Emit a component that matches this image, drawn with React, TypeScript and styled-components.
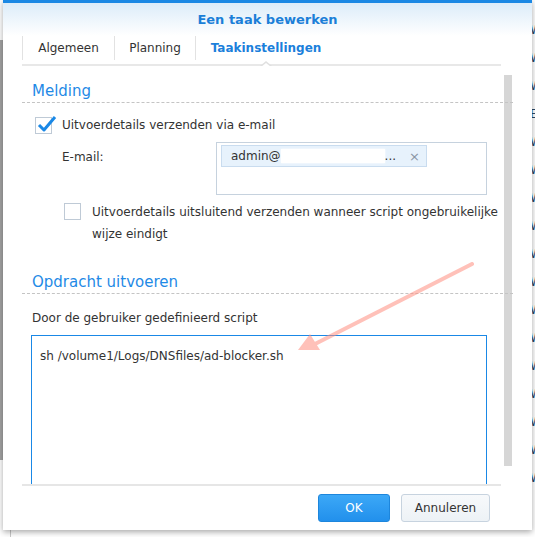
import React from 'react';
import styled, { createGlobalStyle } from 'styled-components';

const GlobalStyle = createGlobalStyle`
  html, body {
    margin: 0;
    padding: 0;
    background: #fff;
  }
  body {
    font-family: "DejaVu Sans", Verdana, sans-serif;
    color: #333;
  }
`;

const Desktop = styled.div`
  position: relative;
  width: 535px;
  height: 537px;
  overflow: hidden;
  background: #fff;
`;

const LeftStrip = styled.div`
  position: absolute;
  left: 0;
  top: 40px;
  width: 3px;
  height: 420px;
  background: #a4a4a4;
`;

/* list of the window behind the dialog, only a sliver shows at the right edge */
const BehindList = styled.div`
  position: absolute;
  left: 530px;
  top: 23px;
  display: flex;
  flex-direction: column;
  gap: 14px;
  font-size: 12px;
  line-height: 14px;
  color: #2b4a6a;
`;

const BehindLine = styled.div`
  position: absolute;
  left: 10px;
  top: 528px;
  width: 1px;
  height: 9px;
  background: #c8c8c8;
`;

const Dialog = styled.div`
  position: absolute;
  left: 3px;
  top: 0;
  width: 529px;
  height: 527px;
  background: #fff;
  border-top: 3px solid #1b88e4;
  box-shadow: 0 2px 6px rgba(0, 0, 0, 0.35);
  display: flex;
  flex-direction: column;
`;

const Header = styled.div`
  height: 33px;
  background: linear-gradient(#dcecf9, #ffffff);
  display: flex;
  align-items: center;
  justify-content: center;
  font-size: 13px;
  font-weight: bold;
  color: #1b7fd8;
`;

const TabBar = styled.div`
  position: relative;
  display: flex;
  margin: 0 31px 0 19px;
  height: 28px;
  border-bottom: 2px solid #e8e8e8;
`;

const Tab = styled.div<{ $active?: boolean; $w: number }>`
  width: ${p => p.$w}px;
  height: 24px;
  box-sizing: border-box;
  border-left: 1px solid #e2e2e2;
  display: flex;
  align-items: center;
  justify-content: center;
  font-size: 12px;
  font-weight: ${p => (p.$active ? 'bold' : 'normal')};
  color: ${p => (p.$active ? '#1b80db' : '#333')};
  &:last-child {
    border-right: 1px solid #e2e2e2;
  }
`;

const Caret = styled.div`
  position: absolute;
  left: 238px;
  bottom: -2px;
  width: 0;
  height: 0;
  border-left: 6px solid transparent;
  border-right: 6px solid transparent;
  border-bottom: 5px solid #e0e0e0;
  &::after {
    content: '';
    position: absolute;
    left: -5px;
    top: 1.5px;
    border-left: 5px solid transparent;
    border-right: 5px solid transparent;
    border-bottom: 4px solid #fff;
  }
`;

const Body = styled.div`
  position: relative;
  height: 418px;
  margin: 0 19px 0 19px;
  overflow: hidden;
`;

const ScrollThumb = styled.div`
  position: absolute;
  left: 482px;
  top: 9px;
  width: 8px;
  height: 391px;
  background: #d6d6d6;
`;

const Content = styled.div`
  position: relative;
  display: flex;
  flex-direction: column;
`;

const SectionTitle = styled.div`
  padding: 13px 0 0 10px;
  height: 23px;
  font-size: 15px;
  color: #1f8ae6;
  border-bottom: 1px dashed #c4c4c4;
  display: flex;
  align-items: center;
`;

const Row = styled.div<{ $indent: number }>`
  display: flex;
  align-items: flex-start;
  padding-left: ${p => p.$indent}px;
`;

const Box = styled.div`
  width: 17px;
  height: 17px;
  box-sizing: border-box;
  border: 1px solid #bfcad6;
  background: #fff;
  position: relative;
  flex: none;
`;

const Tick = styled.svg`
  position: absolute;
  left: 1px;
  top: -3px;
`;

const Label = styled.div`
  font-size: 12px;
  line-height: 22px;
  color: #333;
`;

const FieldLabel = styled.div`
  width: 154px;
  font-size: 12px;
  color: #333;
  padding-top: 8px;
`;

const EmailBox = styled.div`
  width: 271px;
  height: 53px;
  box-sizing: border-box;
  border: 1px solid #c6d2de;
  padding: 2px 4px;
`;

const Chip = styled.div`
  width: 206px;
  height: 22px;
  box-sizing: border-box;
  border: 1px solid #c9dcef;
  background: #e7f2fc;
  display: flex;
  align-items: center;
  padding-left: 9px;
  font-size: 12px;
  color: #333;
`;

const Redact = styled.span`
  display: inline-block;
  width: 104px;
  height: 14px;
  background: #fff;
  box-shadow: 0 0 2px #fff;
`;

const ChipClose = styled.span`
  margin-left: 13px;
  color: #8a96a4;
  font-size: 13px;
`;

const ScriptLabel = styled.div`
  padding: 17px 0 0 10px;
  font-size: 12px;
  color: #333;
`;

const ScriptArea = styled.div`
  margin: 10px 0 0 9px;
  width: 456px;
  height: 170px;
  box-sizing: border-box;
  border: 1px solid #1a88e6;
  padding: 13px 8px;
  font-size: 12px;
  color: #333;
`;

const Arrow = styled.svg`
  position: absolute;
  left: 0;
  top: 0;
  pointer-events: none;
`;

const Footer = styled.div`
  margin: 0 31px 0 19px;
  border-top: 2px solid #e6e6e6;
  display: flex;
  justify-content: flex-end;
  gap: 11px;
  padding: 8px 11px 0 0;
`;

const Button = styled.button<{ $primary?: boolean; $w: number }>`
  width: ${p => p.$w}px;
  height: 28px;
  box-sizing: border-box;
  border-radius: 3px;
  font-family: "DejaVu Sans", Verdana, sans-serif;
  font-size: 12px;
  padding: 0;
  border: 1px solid ${p => (p.$primary ? '#1d86dc' : '#c7d3df')};
  background: ${p =>
    p.$primary
      ? 'linear-gradient(#3ca8f7, #2290ec)'
      : 'linear-gradient(#f7f9fb, #edf2f6)'};
  color: ${p => (p.$primary ? '#fff' : '#333')};
`;

const tabs = [
  { label: 'Algemeen', w: 92 },
  { label: 'Planning', w: 81 },
  { label: 'Taakinstellingen', w: 141, active: true },
];

const behind = ['Wb', 'Wb', 'Wb', 'Ea', 'Wb', 'Wb', 'Wb', 'Wb', 'Wb', 'Wb', 'Wb', 'Wb', 'Wb', 'Wb', 'Wb', 'Wb', 'Wb'];

export default function App() {
  return (
    <Desktop>
      <GlobalStyle />
      <LeftStrip />
      <BehindList>
        {behind.map((t, i) => (
          <span key={i}>{t}</span>
        ))}
      </BehindList>
      <BehindLine />
      <Dialog>
        <Header>Een taak bewerken</Header>
        <TabBar>
          {tabs.map(t => (
            <Tab key={t.label} $w={t.w} $active={t.active}>
              {t.label}
            </Tab>
          ))}
          <Caret />
        </TabBar>
        <Body>
          <ScrollThumb />
          <Content>
            <SectionTitle>Melding</SectionTitle>
            <Row $indent={13} style={{ marginTop: 14 }}>
              <Box>
                <Tick width="20" height="20" viewBox="0 0 20 20">
                  <path d="M2 10 L7 15 L18 2" fill="none" stroke="#1a88e6" strokeWidth="3" strokeLinejoin="round" />
                </Tick>
              </Box>
              <Label style={{ marginLeft: 10, marginTop: -3 }}>Uitvoerdetails verzenden via e-mail</Label>
            </Row>
            <Row $indent={40} style={{ marginTop: 6 }}>
              <FieldLabel>E-mail:</FieldLabel>
              <EmailBox>
                <Chip>
                  admin@<Redact />...
                  <ChipClose>×</ChipClose>
                </Chip>
              </EmailBox>
            </Row>
            <Row $indent={42} style={{ marginTop: 8 }}>
              <Box />
              <Label style={{ marginLeft: 11, marginTop: -2 }}>
                Uitvoerdetails uitsluitend verzenden wanneer script ongebruikelijke
                <br />
                wijze eindigt
              </Label>
            </Row>
            <SectionTitle style={{ marginTop: 12 }}>Opdracht uitvoeren</SectionTitle>
            <ScriptLabel>Door de gebruiker gedefinieerd script</ScriptLabel>
            <ScriptArea>sh /volume1/Logs/DNSfiles/ad-blocker.sh</ScriptArea>
          </Content>
          <Arrow width="491" height="418" viewBox="0 0 491 418">
            <g opacity="0.55">
              <line x1="450" y1="198" x2="291" y2="279" stroke="#ff8f80" strokeWidth="4" strokeLinecap="round" />
              <polygon points="276,284 288,268 298,284" fill="#ff8f80" />
            </g>
          </Arrow>
        </Body>
        <Footer>
          <Button $primary $w={72}>OK</Button>
          <Button $w={89}>Annuleren</Button>
        </Footer>
      </Dialog>
    </Desktop>
  );
}
